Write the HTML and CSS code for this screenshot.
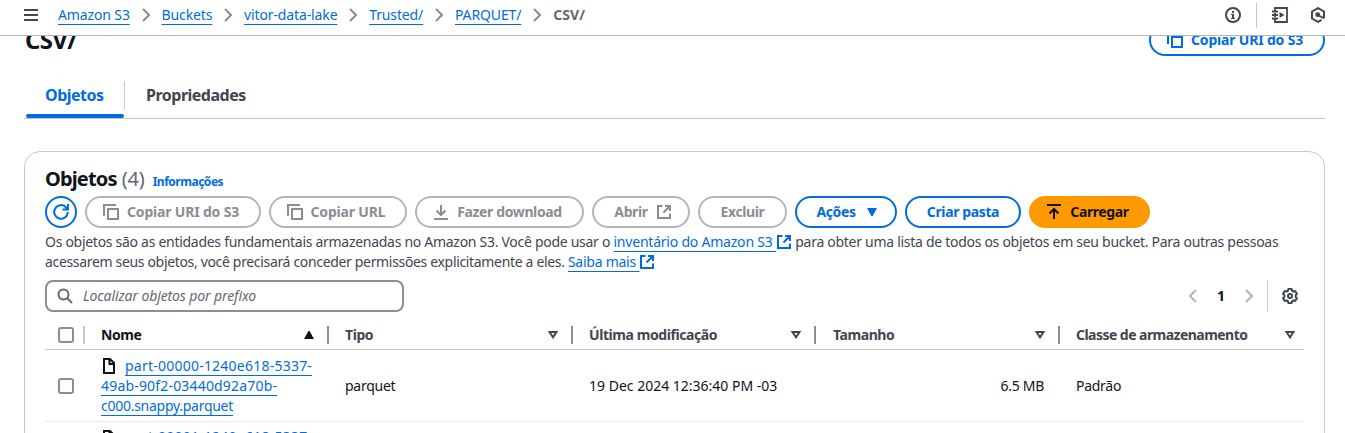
FILE: index.html
```html
<!DOCTYPE html>
<html lang="pt-BR">
<head>
<meta charset="utf-8">
<title>CSV/ - Amazon S3</title>
<link rel="stylesheet" href="styles.css">
</head>
<body>
<svg class="defs" width="0" height="0">
  <symbol id="copy" viewBox="0 0 16 16"><path d="M1 12V1h12M5 5h10v10H5z" fill="none" stroke="currentColor" stroke-width="2"/></symbol>
  <symbol id="external" viewBox="0 0 16 16"><path d="M6.500 2H2v12h12V9.500M9 2h5v5M14 2 7.500 8.500" fill="none" stroke="currentColor" stroke-width="2"/></symbol>
  <symbol id="chevron" viewBox="0 0 8 14"><path d="m1 1 6 6-6 6" fill="none" stroke="currentColor" stroke-width="2"/></symbol>
  <symbol id="sort" viewBox="0 0 10 8"><path d="M1.500 1h7L5 6.300z" fill="none" stroke="currentColor" stroke-width="2"/></symbol>
  <symbol id="file" viewBox="0 0 14 16"><path d="M2 1h6l4 4v10H2zM7.500 1v5H12" fill="none" stroke="currentColor" stroke-width="2"/></symbol>
</svg>
<header class="topbar">
  <svg class="menu" viewBox="0 0 14 12"><path d="M0 1h14M0 6h14M0 11h14" stroke="currentColor" stroke-width="2"/></svg>
  <nav class="crumbs">
    <a class="link">Amazon S3</a><svg class="chev"><use href="#chevron"/></svg>
    <a class="link">Buckets</a><svg class="chev"><use href="#chevron"/></svg>
    <a class="link">vitor-data-lake</a><svg class="chev"><use href="#chevron"/></svg>
    <a class="link">Trusted/</a><svg class="chev"><use href="#chevron"/></svg>
    <a class="link">PARQUET/</a><svg class="chev"><use href="#chevron"/></svg>
    <b class="current">CSV/</b>
  </nav>
  <div class="tools">
    <svg class="i16" viewBox="0 0 16 16"><circle cx="8" cy="8" r="7" fill="none" stroke="currentColor" stroke-width="2"/><path d="M7 4h2v2H7zM6 7h3v4h1v1H6v-1h1V8H6z" fill="currentColor"/></svg>
    <i class="tool-line"></i>
    <svg class="i16" viewBox="0 0 16 16"><path d="M3 4V1h12v14H3v-3M3 6v4M0 4.500h6M0 8h6M0 11.500h6" fill="none" stroke="currentColor" stroke-width="1.800"/><path d="M7.500 5v6l5-3z" fill="currentColor"/></svg>
    <svg class="i16 hex" viewBox="0 0 16 16"><path d="M14 10.800V4.500L8 1.100 2 4.500v7L8 14.900l3.500-2" fill="none" stroke="currentColor" stroke-width="2"/><circle cx="7.700" cy="7.700" r="2.400" fill="currentColor"/><path d="m8 8 6 3.500" stroke="currentColor" stroke-width="2"/></svg>
  </div>
</header>
<main class="page">
  <div class="heading">
    <h1>CSV/</h1>
    <button class="btn lead w176"><svg class="i16"><use href="#copy"/></svg><span class="uri">Copiar URI do S3</span></button>
  </div>
  <div class="tabs"><div class="tab active">Objetos</div><div class="tab">Propriedades</div></div>
  <section class="panel">
    <div class="title"><h2>Objetos</h2><span class="count">(4)</span><a class="info">Informações</a></div>
    <div class="actions">
      <button class="btn round"><svg class="i16" viewBox="0 0 16 16"><path d="M14.800 8A6.800 6.800 0 1 1 12.900 3.200L14.500 5M15 0v5.500H9.500" fill="none" stroke="currentColor" stroke-width="2"/></svg></button>
      <button class="btn off lead w176"><svg class="i16"><use href="#copy"/></svg><span class="uri">Copiar URI do S3</span></button>
      <button class="btn off lead w138"><svg class="i16"><use href="#copy"/></svg><span class="url">Copiar URL</span></button>
      <button class="btn off lead w169"><svg class="i16" viewBox="0 0 16 16"><path d="M8 1v9.500M3.500 6.500 8 11l4.500-4.500M1 15h14" fill="none" stroke="currentColor" stroke-width="2"/></svg><span>Fazer download</span></button>
      <button class="btn off trail w98"><span>Abrir</span><svg class="i16"><use href="#external"/></svg></button>
      <button class="btn off w89"><span>Excluir</span></button>
      <button class="btn trail w102"><span>Ações</span><svg class="caret" viewBox="0 0 10 8"><path d="M0 0h10L5.700 8H4.300z" fill="currentColor"/></svg></button>
      <button class="btn w116"><span>Criar pasta</span></button>
      <button class="btn primary lead w121"><svg class="i16" viewBox="0 0 16 16"><path d="M1 1h14M8 15V5M3.500 9.500 8 5l4.500 4.500" fill="none" stroke="currentColor" stroke-width="2"/></svg><span>Carregar</span></button>
    </div>
    <p class="about"><span class="l1">Os objetos são as entidades fundamentais armazenadas no Amazon S3. Você pode usar o </span><a class="link inv">inventário do Amazon S3&nbsp;</a><svg class="ext"><use href="#external"/></svg><span class="l2"> para obter uma lista de todos os objetos em seu bucket. Para outras pessoas</span><br><span class="l3">acessarem seus objetos, você precisará conceder permissões explicitamente a eles. </span><a class="link more">Saiba mais&nbsp;</a><svg class="ext"><use href="#external"/></svg></p>
    <div class="filter">
      <div class="search"><svg class="i16" viewBox="0 0 16 16"><circle cx="6.500" cy="6.500" r="5" fill="none" stroke="currentColor" stroke-width="2"/><path d="m10 10 5 5" stroke="currentColor" stroke-width="2"/></svg><span>Localizar objetos por prefixo</span></div>
      <div class="pager">
        <svg class="chev flip"><use href="#chevron"/></svg><b>1</b><svg class="chev"><use href="#chevron"/></svg><i class="pager-line"></i>
        <svg class="i16 gear" viewBox="0 0 16 16"><path d="M6.400 1h3.200l.6 1.900 1.100.6 1.900-.5 1.700 2.800L13.600 7.300v1.400l1.300 1.500-1.700 2.800-1.900-.5-1.100.6L9.600 15H6.400l-.6-1.900-1.100-.6-1.900.5-1.700-2.800 1.300-1.500V7.300L1.100 5.800 2.800 3l1.900.5 1.100-.6z" fill="none" stroke="currentColor" stroke-width="2" stroke-linejoin="round"/><circle cx="8" cy="8" r="2" fill="none" stroke="currentColor" stroke-width="2"/></svg>
      </div>
    </div>
    <div class="table">
      <div class="row head">
        <div class="cell pick"><i class="box"></i></div>
        <div class="cell sorted"><b>Nome</b><svg class="sort" viewBox="0 0 10 8"><path d="M0 8h10L5.600 0H4.400z" fill="currentColor"/></svg></div>
        <div class="cell"><b>Tipo</b><svg class="sort"><use href="#sort"/></svg></div>
        <div class="cell"><b>Última modificação</b><svg class="sort"><use href="#sort"/></svg></div>
        <div class="cell"><b class="size">Tamanho</b><svg class="sort"><use href="#sort"/></svg></div>
        <div class="cell last"><b class="class">Classe de armazenamento</b><svg class="sort"><use href="#sort"/></svg></div>
      </div>
      <div class="row">
        <div class="cell pick"><i class="box"></i></div>
        <div class="cell name"><div><svg class="file"><use href="#file"/></svg><a class="link n1">part-00000-1240e618-5337-</a><br><a class="link n2">49ab-90f2-03440d92a70b-</a><br><a class="link n3">c000.snappy.parquet</a></div></div>
        <div class="cell"><span class="n3">parquet</span></div>
        <div class="cell"><span>19 Dec 2024 12:36:40 PM -03</span></div>
        <div class="cell num"><span>6.5 MB</span></div>
        <div class="cell"><span class="n3">Padrão</span></div>
      </div>
      <div class="row next">
        <div class="cell pick"><i class="box"></i></div>
        <div class="cell name"><div><svg class="file"><use href="#file"/></svg><a class="link n1">part-00001-1240e618-5337-</a><br><a class="link n2">49ab-90f2-03440d92a70b-</a><br><a class="link n3">c000.snappy.parquet</a></div></div>
        <div class="cell"><span class="n3">parquet</span></div>
        <div class="cell"><span>19 Dec 2024 12:36:40 PM -03</span></div>
        <div class="cell num"><span>6.5 MB</span></div>
        <div class="cell"><span class="n3">Padrão</span></div>
      </div>
    </div>
  </section>
</main>
</body>
</html>
```

FILE: styles.css
```css
* { box-sizing: border-box; }
body {
  margin: 0;
  height: 433px;
  overflow: hidden;
  display: flex;
  flex-direction: column;
  background: #fff;
  color: #0f141a;
  font: 14px/20px "Noto Sans", "Open Sans", sans-serif;
}
h1, h2, p { margin: 0; }
svg { flex: none; }
.defs { display: none; }
.i16 { width: 16px; height: 16px; }
.link {
  color: #006ce0;
  white-space: nowrap;
  text-decoration: underline 1px;
  text-underline-offset: 4px;
  text-decoration-skip-ink: none;
}

.topbar {
  flex: none;
  height: 36px;
  padding: 0 19px 5px 24px;
  display: flex;
  align-items: center;
  border-bottom: 1px solid #b4b4bb;
  color: #424650;
}
.menu { width: 14px; height: 12px; margin-right: 20px; }
.crumbs { display: flex; align-items: center; gap: 12px; letter-spacing: -.13px; }
.chev { width: 8px; height: 14px; color: #8c8c94; }
.crumbs .chev { margin-right: -.2px; }
.current { color: #656871; letter-spacing: .1px; }
.tools { margin-left: auto; display: flex; align-items: center; }
.tool-line { width: 1px; height: 25px; margin: 0 15px; background: #c6c6cd; }
.hex { margin-left: 22px; }

.page { flex: 1; min-height: 0; overflow: hidden; padding: 0 20px 0 24px; }
.heading {
  height: 32px;
  margin-top: -12px;
  display: flex;
  justify-content: space-between;
  align-items: center;
}
h1 { margin-left: 1px; font-size: 24px; line-height: 30px; letter-spacing: -.7px; }
.tabs { height: 63px; padding-top: 20px; display: flex; border-bottom: 1px solid #c6c6cd; }
.tab {
  position: relative;
  height: 42px;
  padding: 9px 21px 0;
  font-size: 16px;
  font-weight: 700;
  letter-spacing: -.5px;
  color: #424650;
}
.active { width: 101px; color: #006ce0; }
.active::before {
  content: "";
  position: absolute;
  right: 0;
  top: 5px;
  width: 1px;
  height: 28px;
  background: #c6c6cd;
}
.active::after {
  content: "";
  position: absolute;
  left: 2px;
  right: 1px;
  bottom: 0;
  height: 4px;
  border-radius: 3px;
  background: #006ce0;
}

.panel {
  height: 600px;
  margin-top: 32px;
  padding: 15px 20px 0;
  border: 1px solid #c6c6cd;
  border-radius: 16px;
}
.title { height: 24px; display: flex; align-items: baseline; line-height: 24px; }
h2 { font-size: 20px; line-height: 24px; letter-spacing: -.85px; }
.count { margin-left: 5px; font-size: 20px; letter-spacing: -.15px; color: #656871; }
.info { margin-left: 8px; font-size: 12px; font-weight: 700; letter-spacing: -.48px; color: #006ce0; }

.actions { display: flex; gap: 8px; margin-top: 5px; }
.btn {
  height: 32px;
  padding: 0;
  display: flex;
  align-items: center;
  justify-content: center;
  gap: 8px;
  border: 2px solid #006ce0;
  border-radius: 16px;
  background: #fff;
  color: #006ce0;
  font: 700 14px/20px "Noto Sans", "Open Sans", sans-serif;
  letter-spacing: -.38px;
  white-space: nowrap;
}
.lead { padding-right: 4px; }
.trail { padding-left: 4px; }
.off { border-color: #b4b4bb; color: #8c8c94; }
.primary { border-color: #ff9900; background: #ff9900; color: #0f141a; }
.uri, .url { letter-spacing: -.18px; }
.round { width: 32px; }
.w176 { width: 176px; }
.w138 { width: 138px; }
.w169 { width: 169px; }
.w98 { width: 98px; }
.w89 { width: 89px; }
.w102 { width: 102px; }
.w116 { width: 116px; }
.w121 { width: 121px; }
.caret { width: 10px; height: 8px; margin: 0 3px; }

.about { margin-top: 4px; color: #424650; white-space: nowrap; height: 40px; }
.l1, .l2 { letter-spacing: -.286px; }
.l3 { letter-spacing: -.333px; }
.inv { letter-spacing: -.215px; }
.more { letter-spacing: -.25px; }
.ext { width: 16px; height: 16px; vertical-align: -3px; color: #006ce0; }

.filter { display: flex; justify-content: space-between; margin-top: 8px; }
.search {
  width: 359px;
  height: 32px;
  padding-left: 10px;
  display: flex;
  align-items: center;
  gap: 10px;
  border: 2px solid #8c8c94;
  border-radius: 8px;
  color: #656871;
  font-style: italic;
  letter-spacing: -.11px;
}
.pager { display: flex; align-items: center; padding-right: 6px; }
.pager b { width: 48px; text-align: center; }
.pager .chev { color: #b4b4bb; }
.flip { transform: scaleX(-1); }
.pager-line { width: 1px; height: 32px; margin: 0 14px; background: #c6c6cd; }
.gear { color: #424650; }

.table { margin-top: 8px; width: 1259px; }
.row {
  display: grid;
  grid-template-columns: 40px 244px 244px 243px 244px 244px;
  height: 72px;
  border-bottom: 1px solid #ebebf0;
}
.head { height: 30px; border-color: #c6c6cd; color: #424650; }
.cell { position: relative; padding-left: 16px; display: flex; align-items: center; white-space: nowrap; }
.head .cell { justify-content: space-between; padding-right: 15px; letter-spacing: -.43px; }
.head .cell::after {
  content: "";
  position: absolute;
  right: 0;
  top: 6px;
  width: 2px;
  height: 18px;
  background: #8c8c94;
}
.head .pick::after { background: #c6c6cd; }
.head .last { padding-right: 9px; }
.head .last::after { display: none; }
.head .sorted { color: #0f141a; }
.head .pick, .pick { padding: 0 0 0 13px; }
.box { flex: none; width: 16px; height: 16px; border: 2px solid #8c8c94; border-radius: 3px; }
.sort { width: 10px; height: 8px; }
.size { margin-left: 1px; }
.class { letter-spacing: -.54px; }
.num { justify-content: flex-end; padding-right: 16px; letter-spacing: -.3px; }
.file { width: 14px; height: 16px; margin: 0 9px 0 1px; vertical-align: -3px; }
.next .name { padding-bottom: 2px; }
.next .file { vertical-align: -4px; }
.n1 { letter-spacing: .23px; }
.n2 { letter-spacing: .18px; }
.n3 { letter-spacing: -.27px; }
```
